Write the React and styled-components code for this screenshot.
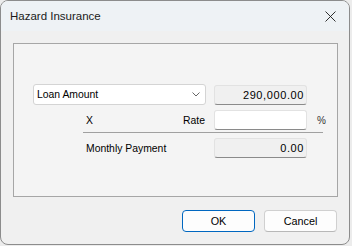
import React from 'react';
import styled, { createGlobalStyle } from 'styled-components';

const GlobalStyle = createGlobalStyle`
  html, body {
    margin: 0;
    padding: 0;
    background: #ececec;
  }
  body {
    font-family: 'Liberation Sans', Arial, sans-serif;
    color: #000;
  }
`;

const Window = styled.div`
  width: 350px;
  height: 245px;
  box-sizing: border-box;
  border: 1px solid #8c8c8c;
  border-radius: 8px;
  overflow: hidden;
  display: flex;
  flex-direction: column;
  background: #f0f0f0;
`;

const TitleBar = styled.div`
  height: 30px;
  flex-shrink: 0;
  display: flex;
  align-items: center;
  justify-content: space-between;
  padding: 0 7px 0 9px;
  background: #eef2f5;
`;

const Title = styled.span`
  font-size: 11.5px;
  color: #1a1a1a;
`;

const CloseButton = styled.button`
  width: 24px;
  height: 24px;
  padding: 0;
  border: none;
  background: transparent;
  display: flex;
  align-items: center;
  justify-content: center;
`;

const Body = styled.div`
  flex: 1;
  padding: 12px 11px 0 12px;
  display: flex;
  flex-direction: column;
`;

const GroupBox = styled.div`
  height: 154px;
  box-sizing: border-box;
  border: 1px solid #a6a6a6;
  background: #f4f4f4;
  padding: 40px 0 0 19px;
  display: flex;
  flex-direction: column;
`;

const Row = styled.div`
  display: grid;
  grid-template-columns: 50px 123px 8px 93px 16px;
  height: ${p => p.h || 20}px;
  margin-top: ${p => p.mt || 0}px;
  font-size: 10.4px;
`;

const Combo = styled.div`
  grid-column: 1 / 3;
  box-sizing: border-box;
  height: 21px;
  background: #fff;
  border: 1px solid #d4d4d4;
  border-radius: 3px;
  display: flex;
  align-items: center;
  justify-content: space-between;
  padding: 0 5px 0 3px;
`;

const Field = styled.div`
  grid-column: 4;
  box-sizing: border-box;
  height: 20px;
  margin-top: ${p => p.mt || 0}px;
  background: ${p => (p.readOnly ? '#f0f0f0' : '#fff')};
  border: 1px solid #e2e2e2;
  border-bottom-color: #8a8a8a;
  border-radius: 3px;
  display: flex;
  align-items: center;
  justify-content: flex-end;
  padding-right: 2px;
  font-size: 11px;
  letter-spacing: 0.6px;
`;

const LabelCell = styled.div`
  grid-column: ${p => p.col || 2};
  display: flex;
  align-items: center;
  justify-content: space-between;
  padding: 0 1px 0 3px;
`;

const Percent = styled.div`
  grid-column: 5;
  display: flex;
  align-items: center;
  padding-left: 10px;
  font-size: 10px;
  color: #333;
`;

const Separator = styled.div`
  grid-column: 2 / 6;
  height: 1px;
  background: #a0a0a0;
`;

const ButtonRow = styled.div`
  display: flex;
  justify-content: flex-end;
  gap: 9px;
  margin-top: 13px;
  padding-right: 1px;
`;

const Button = styled.button`
  width: 73px;
  height: 22px;
  box-sizing: border-box;
  padding: 0;
  background: #fdfdfd;
  border: 1px solid ${p => (p.primary ? '#0067c0' : '#d0d0d0')};
  border-bottom-color: ${p => (p.primary ? '#0067c0' : '#b8b8b8')};
  border-radius: 4px;
  font-family: 'Liberation Sans', Arial, sans-serif;
  font-size: 10.8px;
  color: #000;
`;

const Chevron = () => (
  <svg width="8" height="5" viewBox="0 0 8 5">
    <path d="M0.5 0.5 L4 4 L7.5 0.5" fill="none" stroke="#666" strokeWidth="1" />
  </svg>
);

const CloseIcon = () => (
  <svg width="11" height="11" viewBox="0 0 11 11">
    <path d="M0.5 0.5 L10.5 10.5 M10.5 0.5 L0.5 10.5" stroke="#1a1a1a" strokeWidth="0.9" />
  </svg>
);

const App = () => (
  <>
    <GlobalStyle />
    <Window>
      <TitleBar>
        <Title>Hazard Insurance</Title>
        <CloseButton aria-label="Close">
          <CloseIcon />
        </CloseButton>
      </TitleBar>
      <Body>
        <GroupBox>
          <Row h={21}>
            <Combo>
              <span>Loan Amount</span>
              <Chevron />
            </Combo>
            <Field readOnly mt={1}>290,000.00</Field>
          </Row>
          <Row mt={5}>
            <LabelCell>
              <span>X</span>
              <span>Rate</span>
            </LabelCell>
            <Field />
            <Percent>%</Percent>
          </Row>
          <Row h={1} mt={2}>
            <Separator />
          </Row>
          <Row mt={5}>
            <LabelCell>
              <span>Monthly Payment</span>
            </LabelCell>
            <Field readOnly>0.00</Field>
          </Row>
        </GroupBox>
        <ButtonRow>
          <Button primary>OK</Button>
          <Button>Cancel</Button>
        </ButtonRow>
      </Body>
    </Window>
  </>
);

export default App;
